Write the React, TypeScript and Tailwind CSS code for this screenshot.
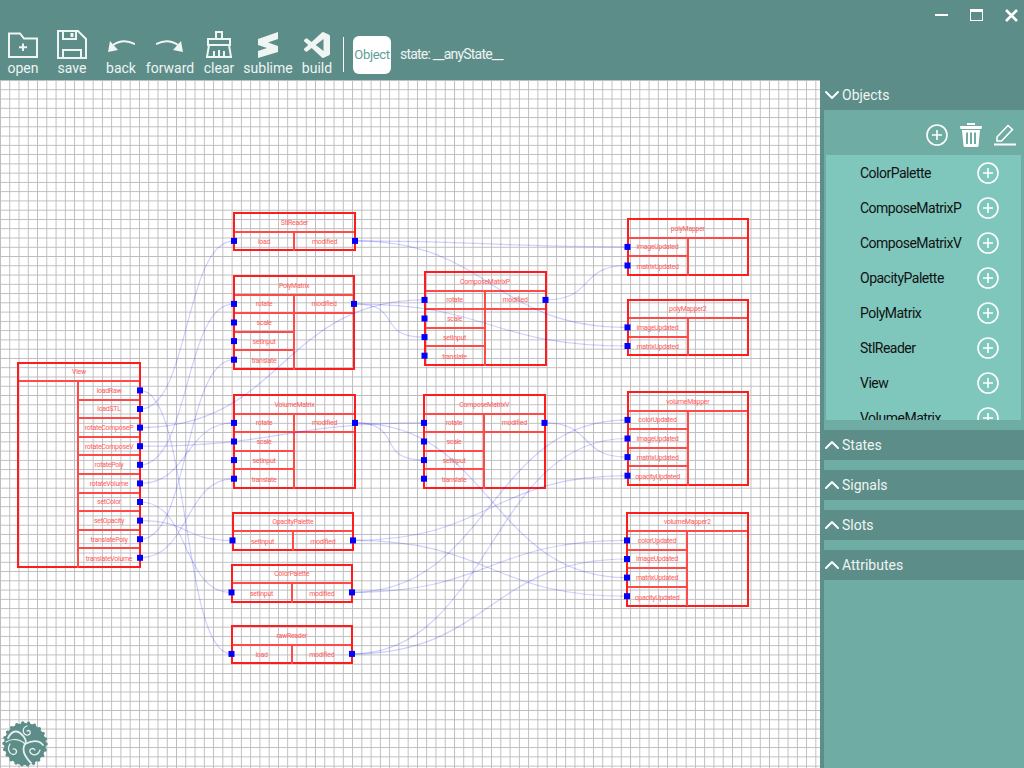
import { ChevronDown, ChevronUp } from 'lucide-react';

const ROW = 18.6;

interface NodeData {
  title: string;
  x: number;
  y: number;
  w: number;
  split: number;
  inputs: string[];
  outputs: string[];
  rows: number;
}

const matrixIn = ['rotate', 'scale', 'setInput', 'translate'];

const nodes: Record<string, NodeData> = {
  view: {
    title: 'View', x: 18, y: 362.5, w: 122, split: 60, inputs: [], rows: 10,
    outputs: ['loadRaw', 'loadSTL', 'rotateComposeP', 'rotateComposeV', 'rotatePoly', 'rotateVolume', 'setColor', 'setOpacity', 'translatePoly', 'translateVolume'],
  },
  stl: { title: 'StlReader', x: 234, y: 213, w: 121, split: 60, inputs: ['load'], outputs: ['modified'], rows: 1 },
  poly: { title: 'PolyMatrix', x: 234, y: 276, w: 120, split: 60, inputs: matrixIn, outputs: ['modified'], rows: 4 },
  composeP: { title: 'ComposeMatrixP', x: 424.5, y: 272, w: 121, split: 60, inputs: matrixIn, outputs: ['modified'], rows: 4 },
  volume: { title: 'VolumeMatrix', x: 234, y: 395, w: 121, split: 60, inputs: matrixIn, outputs: ['modified'], rows: 4 },
  composeV: { title: 'ComposeMatrixV', x: 424, y: 395, w: 120.5, split: 60, inputs: matrixIn, outputs: ['modified'], rows: 4 },
  opacity: { title: 'OpacityPalette', x: 232.5, y: 512.5, w: 120.5, split: 60, inputs: ['setInput'], outputs: ['modified'], rows: 1 },
  color: { title: 'ColorPalette', x: 231.5, y: 564.5, w: 120.5, split: 60, inputs: ['setInput'], outputs: ['modified'], rows: 1 },
  raw: { title: 'rawReader', x: 231.5, y: 626, w: 120.5, split: 60, inputs: ['load'], outputs: ['modified'], rows: 1 },
  polyMapper: { title: 'polyMapper', x: 627.5, y: 219, w: 120.5, split: 60, inputs: ['imageUpdated', 'matrixUpdated'], outputs: [], rows: 2 },
  polyMapper2: { title: 'polyMapper2', x: 627.5, y: 299.5, w: 120.5, split: 60, inputs: ['imageUpdated', 'matrixUpdated'], outputs: [], rows: 2 },
  volumeMapper: { title: 'volumeMapper', x: 627.5, y: 392, w: 120.5, split: 60, inputs: ['colorUpdated', 'imageUpdated', 'matrixUpdated', 'opacityUpdated'], outputs: [], rows: 4 },
  volumeMapper2: { title: 'volumeMapper2', x: 627, y: 512.5, w: 120.5, split: 60, inputs: ['colorUpdated', 'imageUpdated', 'matrixUpdated', 'opacityUpdated'], outputs: [], rows: 4 },
};

// from node + output row, to node + input row
const wires: [string, number, string, number][] = [
  ['view', 0, 'raw', 0],
  ['view', 1, 'stl', 0],
  ['view', 2, 'composeP', 0],
  ['view', 3, 'composeV', 0],
  ['view', 4, 'poly', 0],
  ['view', 5, 'volume', 0],
  ['view', 6, 'color', 0],
  ['view', 7, 'opacity', 0],
  ['view', 8, 'poly', 3],
  ['view', 9, 'volume', 3],
  ['stl', 0, 'polyMapper', 0],
  ['stl', 0, 'polyMapper2', 0],
  ['poly', 0, 'composeP', 2],
  ['poly', 0, 'polyMapper2', 1],
  ['composeP', 0, 'polyMapper', 1],
  ['volume', 0, 'composeV', 2],
  ['volume', 0, 'volumeMapper2', 2],
  ['composeV', 0, 'volumeMapper', 2],
  ['opacity', 0, 'volumeMapper', 3],
  ['opacity', 0, 'volumeMapper2', 3],
  ['color', 0, 'volumeMapper', 0],
  ['color', 0, 'volumeMapper2', 0],
  ['raw', 0, 'volumeMapper', 1],
  ['raw', 0, 'volumeMapper2', 1],
];

const portY = (n: NodeData, i: number) => n.y - 80 + ROW * (i + 1.5);

function wirePath(a: string, ai: number, b: string, bi: number) {
  const from = nodes[a];
  const to = nodes[b];
  const x1 = from.x + from.w;
  const y1 = portY(from, ai);
  const x2 = to.x;
  const y2 = portY(to, bi);
  const c = Math.max(50, (x2 - x1) / 2);
  return `M${x1} ${y1} C${x1 + c} ${y1} ${x2 - c} ${y2} ${x2} ${y2}`;
}

function Cell({ label, last }: { label: string; last?: boolean }) {
  return (
    <div className={`h-[18.6px] pt-[2px] flex items-center justify-center whitespace-nowrap ${last ? '' : 'border-b-2 border-[#ff4a4a]'}`}>
      {label}
    </div>
  );
}

function GraphNode({ node }: { node: NodeData }) {
  return (
    <div
      className="absolute flex flex-col border-2 border-[#ff1c1c] text-[7px] tracking-[-0.3px] leading-none text-[#ff5a5a]"
      style={{ left: node.x - 1, top: node.y - 81, width: node.w + 2, height: ROW * (node.rows + 1) + 2 }}
    >
      <div className="h-[18.6px] pt-[2px] shrink-0 flex items-center justify-center border-b-2 border-[#ff4a4a]">{node.title}</div>
      <div className="flex flex-1">
        <div className="border-r-2 border-[#ff4a4a]" style={{ width: node.split }}>
          {node.inputs.map((label, i) => (
            <Cell key={label} label={label} last={i === node.rows - 1} />
          ))}
        </div>
        <div className="flex-1">
          {node.outputs.map((label, i) => (
            <Cell key={label} label={label} last={i === node.rows - 1} />
          ))}
        </div>
      </div>
    </div>
  );
}

function Wires() {
  return (
    <svg className="absolute inset-0 w-[820px] h-[688px]" viewBox="0 0 820 688" fill="none">
      {wires.map(([a, ai, b, bi]) => (
        <path key={`${a}${ai}${b}${bi}`} d={wirePath(a, ai, b, bi)} stroke="#0000ff" strokeOpacity={0.18} strokeWidth={1.2} />
      ))}
      {Object.entries(nodes).map(([id, n]) => (
        <g key={id} fill="#0000ff">
          {n.inputs.map((_, i) => (
            <rect key={i} x={n.x - 3} y={portY(n, i) - 3} width={6} height={6} />
          ))}
          {n.outputs.map((_, i) => (
            <rect key={i} x={n.x + n.w - 3} y={portY(n, i) - 3} width={6} height={6} />
          ))}
        </g>
      ))}
    </svg>
  );
}

function OpenIcon() {
  return (
    <svg width="30" height="26" viewBox="0 0 30 26" fill="none" stroke="currentColor" strokeWidth="2">
      <path d="M1 25V1.500H12L16 6.500H29V25Z" />
      <path d="M15 11.500V19M11 15.200H19" />
    </svg>
  );
}

function SaveIcon() {
  return (
    <svg width="30" height="29" viewBox="0 0 30 29" fill="none" stroke="currentColor" strokeWidth="2">
      <path d="M1 1H21L29 9V28H1Z" />
      <path d="M6 1V9H19V1" />
      <path d="M6 28V20H24V28" />
      <path d="M15 3V7" strokeWidth="3" />
    </svg>
  );
}

function BackIcon({ flip }: { flip?: boolean }) {
  return (
    <svg width="28" height="16" viewBox="0 0 28 16" fill="none" className={flip ? '-scale-x-100' : ''}>
      <path d="M28 7C20 3 13 3 6 8" stroke="currentColor" strokeWidth="2" />
      <path d="M1 15L3 4L11 13Z" fill="currentColor" />
    </svg>
  );
}

function BrushIcon() {
  return (
    <svg width="26" height="27" viewBox="0 0 26 27" fill="none" stroke="currentColor" strokeWidth="2">
      <path d="M10 8V1H16V8" />
      <path d="M2 14V8H24V14" />
      <path d="M1 14H25" />
      <path d="M3 14L1 26H25L23 14" />
      <path d="M8 26V20M13 26V19M18 26V20" />
    </svg>
  );
}

function SublimeIcon() {
  return (
    <svg width="20" height="26" viewBox="0 0 20 26" fill="currentColor">
      <path d="M0 7L20 0V7L10 10.500L20 14V20L0 26V19L9 16L0 13Z" />
    </svg>
  );
}

function VsCodeIcon() {
  return (
    <svg width="26" height="26" viewBox="0 0 24 24" fill="currentColor">
      <path d="M23.15 2.587L18.21.21a1.494 1.494 0 0 0-1.705.29l-9.46 8.63-4.12-3.128a.999.999 0 0 0-1.276.057L.327 7.261A1 1 0 0 0 .326 8.74L3.899 12 .326 15.26a1 1 0 0 0 .001 1.479L1.65 17.94a.999.999 0 0 0 1.276.057l4.12-3.128 9.46 8.63a1.492 1.492 0 0 0 1.704.29l4.942-2.377A1.5 1.5 0 0 0 24 20.06V3.939a1.5 1.5 0 0 0-.85-1.352zm-5.146 14.861L10.826 12l7.178-5.448v10.896z" />
    </svg>
  );
}

function PlusCircle({ size = 22 }: { size?: number }) {
  return (
    <svg width={size} height={size} viewBox="0 0 22 22" fill="none" stroke="white" strokeWidth="1.6">
      <circle cx="11" cy="11" r="10" />
      <path d="M11 6V16M6 11H16" />
    </svg>
  );
}

function TrashIcon() {
  return (
    <svg width="22" height="24" viewBox="0 0 22 24" fill="white">
      <rect x="7" y="0" width="8" height="2" />
      <path d="M0 3H22L21.500 6H.5Z" />
      <path fillRule="evenodd" d="M2 7H20L18.500 23Q18.400 24 17 24H5Q3.600 24 3.500 23ZM6 9.500V21H8V9.500ZM10 9.500V21H12V9.500ZM14 9.500V21H16V9.500Z" />
    </svg>
  );
}

function EditIcon() {
  return (
    <svg width="22" height="22" viewBox="0 0 22 22" fill="none" stroke="white" strokeWidth="1.6">
      <path d="M3 17V13L14 1.500L18.500 5.500L7.500 17Z" />
      <path d="M0 20.500H22" strokeWidth="2" />
    </svg>
  );
}

function Logo() {
  return (
    <svg width="50" height="50" viewBox="0 0 50 50" fill="none" className="absolute left-0 bottom-0">
      <circle cx="25" cy="26" r="21" fill="#5d8d88" stroke="#5d8d88" strokeWidth="3.500" strokeLinecap="round" strokeDasharray="0 6" />
      <g stroke="#e6f0ee" strokeLinecap="round">
        <path d="M8 20C12 12 18 11 24 19C26 22 27 24 25 26" strokeWidth="1.800" />
        <path d="M25 26C31 23 38 21 43 27" strokeWidth="1.800" />
        <path d="M25 26C22 31 24 38 31 45" strokeWidth="1.800" />
        <path d="M6 24C12 20 20 21 25 26" strokeWidth="1.200" />
        <path d="M27 8C21 10 23 18 28 17C32 16 30 11 27 13" strokeWidth="1.300" />
        <path d="M10 26C6 32 11 38 15 36C18 34 16 30 13 31" strokeWidth="1.300" />
        <path d="M40 32C38 38 32 38 30 34C29 31 33 29 35 32" strokeWidth="1.300" />
      </g>
    </svg>
  );
}

const tools = [
  { label: 'open', w: 'w-[44px]', icon: <OpenIcon /> },
  { label: 'save', w: 'w-[54px]', icon: <SaveIcon /> },
  { label: 'back', w: 'w-[44px]', icon: <BackIcon /> },
  { label: 'forward', w: 'w-[54px]', icon: <BackIcon flip /> },
  { label: 'clear', w: 'w-[44px]', icon: <BrushIcon /> },
  { label: 'sublime', w: 'w-[54px]', icon: <SublimeIcon /> },
  { label: 'build', w: 'w-[44px]', icon: <VsCodeIcon /> },
];

const objects = ['ColorPalette', 'ComposeMatrixP', 'ComposeMatrixV', 'OpacityPalette', 'PolyMatrix', 'StlReader', 'View', 'VolumeMatrix'];

function Toolbar() {
  return (
    <div className="h-20 shrink-0 bg-[#5d8d88] text-[#eef5f3] text-sm flex flex-col">
      <div className="h-[30px] flex justify-end items-start">
        <div className="w-[35px] h-[30px] flex items-center justify-center">
          <div className="w-[13px] h-[2px] bg-white" />
        </div>
        <div className="w-[35px] h-[30px] mr-1 flex items-center justify-center">
          <div className="w-[13px] h-[12px] border border-white border-t-[3px]" />
        </div>
        <div className="w-[26px] h-[30px] flex items-center justify-center">
          <svg width="13" height="13" viewBox="0 0 13 13" stroke="white" strokeWidth="2.600">
            <path d="M1 1L12 12M12 1L1 12" />
          </svg>
        </div>
      </div>
      <div className="flex items-end pl-[1px]">
        {tools.map((t) => (
          <div key={t.label} className={`${t.w} flex flex-col items-center h-[47px] justify-end`}>
            <div className="flex-1 flex items-center">{t.icon}</div>
            <span className="leading-[19px] -mb-px whitespace-nowrap">{t.label}</span>
          </div>
        ))}
        <div className="w-[1px] h-[35px] bg-white ml-1 mb-[5px]" />
        <div className="w-[38px] h-[38px] rounded-md bg-white ml-[9px] mb-[3px] text-[13px] tracking-tight text-[#5f9e97] flex items-center justify-center">
          Object
        </div>
        <span className="ml-[9px] mb-[13px] leading-[19px] tracking-[-0.8px]">state: __anyState__</span>
      </div>
    </div>
  );
}

function SectionHeader({ label, open }: { label: string; open?: boolean }) {
  return (
    <div className="h-[30px] shrink-0 bg-[#5d8d88] flex items-center text-sm text-[#eef5f3]">
      {open ? (
        <ChevronDown size={24} strokeWidth={2} className="text-white -ml-[4px] -mr-[2px]" />
      ) : (
        <ChevronUp size={24} strokeWidth={2} className="text-white -ml-[4px] -mr-[2px]" />
      )}
      {label}
    </div>
  );
}

function SidePanel() {
  return (
    <div className="w-[204px] shrink-0 bg-[#5d8d88] pl-1 flex flex-col">
      <div className="flex-1 bg-[#6fada4] flex flex-col">
        <SectionHeader label="Objects" open />
        <div className="h-[320px] shrink-0 flex flex-col">
          <div className="h-[45px] shrink-0 flex items-center justify-end gap-[12px] pr-[8px] pt-1">
            <PlusCircle />
            <TrashIcon />
            <EditIcon />
          </div>
          <div className="ml-[2px] mr-[3px] h-[265px] bg-[#7fc7bd] overflow-hidden">
            {objects.map((name) => (
              <div key={name} className="h-[35px] flex items-center pl-[34px] pr-[22px] justify-between text-sm tracking-[-0.5px] text-[#111]">
                <span>{name}</span>
                <PlusCircle />
              </div>
            ))}
          </div>
        </div>
        {['States', 'Signals', 'Slots', 'Attributes'].map((label) => (
          <div key={label} className="h-10 shrink-0">
            <SectionHeader label={label} />
          </div>
        ))}
      </div>
    </div>
  );
}

export default function App() {
  return (
    <div className="w-[1024px] h-[768px] overflow-hidden flex flex-col font-['Roboto',sans-serif]">
      <Toolbar />
      <div className="flex flex-1 min-h-0">
        <div className="relative w-[820px] bg-white bg-[linear-gradient(to_right,#bcbcbc_1px,transparent_1px),linear-gradient(#bcbcbc_1px,transparent_1px)] bg-[size:9.28px_9.28px]">
          {Object.entries(nodes).map(([id, n]) => (
            <GraphNode key={id} node={n} />
          ))}
          <Wires />
          <Logo />
        </div>
        <SidePanel />
      </div>
    </div>
  );
}
